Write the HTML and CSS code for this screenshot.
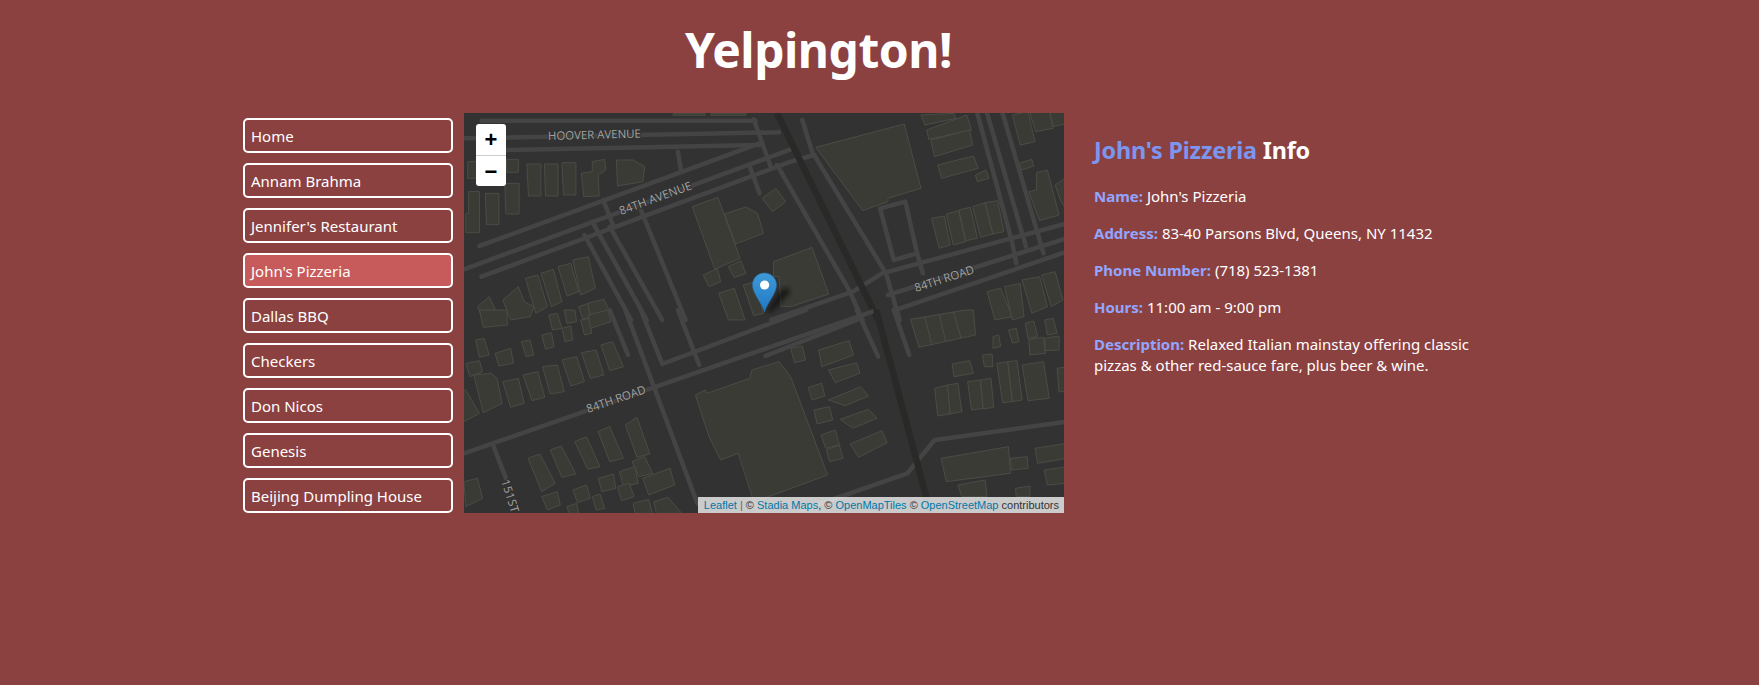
FILE: index.html
```html
<!DOCTYPE html>
<html lang="en">
<head>
<meta charset="utf-8">
<title>Yelpington!</title>
<link rel="stylesheet" href="styles.css">
</head>
<body>
<div class="page">
  <h1 class="title">Yelpington!</h1>
  <main class="content">
    <nav class="nav">
      <a class="nav-link">Home</a>
      <a class="nav-link">Annam Brahma</a>
      <a class="nav-link">Jennifer's Restaurant</a>
      <a class="nav-link active">John's Pizzeria</a>
      <a class="nav-link">Dallas BBQ</a>
      <a class="nav-link">Checkers</a>
      <a class="nav-link">Don Nicos</a>
      <a class="nav-link">Genesis</a>
      <a class="nav-link">Beijing Dumpling House</a>
    </nav>
    <div class="map">
      <svg class="map-art" viewBox="0 0 600 400" width="600" height="400">
        <defs>
          <linearGradient id="pinFill" x1="0" y1="0" x2="0" y2="1">
            <stop offset="0" stop-color="#3f9ad8"/>
            <stop offset="1" stop-color="#1f78c4"/>
          </linearGradient>
          <filter id="blur"><feGaussianBlur stdDeviation="2.5"/></filter>
        </defs>
        <g transform="translate(-4,-3) scale(.389,.3333)">
          <g class="bld">
            <path d="M915 112L1142 42L1185 235L1100 265V275L1035 302Z"/>
            <path d="M597 290L663 262L720 445L655 478Z"/><path d="M680 312L735 291L765 310L780 370L708 402Z"/>
            <path d="M777 265L812 235L837 275L803 305Z"/><path d="M625 495L662 476L670 515L640 530Z"/>
            <path d="M690 470L722 452L735 490L705 503Z"/><path d="M806 455L905 412L948 552L850 590L825 590L820 500L806 500Z"/>
            <path d="M665 550L705 535L733 630H690Z"/><path d="M728 525L760 515L780 610L755 617Z"/>
            <path d="M20 155H60V205H20Z"/><path d="M120 148H150V187H120Z"/><path d="M172 162H208V258H176Z"/>
            <path d="M217 162H252V258H220Z"/><path d="M262 158H298V255H266Z"/>
            <path d="M312 190L340 185V155L372 148L375 180L355 195L358 258L318 260Z"/>
            <path d="M402 150H445L475 170L470 215L405 228Z"/><path d="M115 220H152V312H118Z"/>
            <path d="M65 250H100V344H68Z"/><path d="M22 245H50V368H15V310H22Z"/>
            <path d="M548 10H630V16H548Z"/><path d="M645 10H735V16H645Z"/>
            <path d="M1185 15L1270 10L1275 25L1195 45Z"/><path d="M1200 60L1303 15L1315 60L1205 88Z"/>
            <path d="M1210 90L1310 60L1318 105L1220 140Z"/><path d="M1228 165L1320 138L1332 175L1238 205Z"/>
            <path d="M1325 195L1352 180L1360 205L1330 215Z"/><path d="M1212 325L1245 318L1260 405L1232 415Z"/>
            <path d="M1250 312L1282 302L1300 395L1268 405Z"/><path d="M1282 300L1312 292L1330 385L1300 392Z"/>
            <path d="M1318 290L1350 278L1370 372L1338 382Z"/><path d="M1350 278L1382 272L1398 365L1370 372Z"/>
            <path d="M1437 160L1470 148L1475 168L1445 180Z"/><path d="M1420 15L1460 5L1478 95L1440 105Z"/>
            <path d="M1465 10L1515 0L1525 55L1480 65Z"/><path d="M1515 0H1560V40L1525 50Z"/>
            <path d="M1462 245L1482 240V188L1510 180L1540 315L1490 332Z"/><path d="M1530 225L1560 200V300L1545 275Z"/>
            <path d="M1355 545L1390 535L1420 620L1375 630Z"/><path d="M1400 530L1440 520L1450 620L1420 630Z"/>
            <path d="M1445 510L1490 500L1510 590L1470 610Z"/><path d="M1495 495L1530 485L1550 570L1520 590Z"/>
            <path d="M290 450L330 440L348 535L310 555Z"/><path d="M252 470L285 460L305 545L275 558Z"/>
            <path d="M208 490L240 478L262 575L235 590Z"/><path d="M168 505L200 495L225 590L195 610Z"/>
            <path d="M110 570L150 530L165 575L190 590L180 620L130 630Z"/><path d="M45 590L75 560L95 610L115 630H60Z"/>
            <path d="M305 590L330 580L335 625H315Z"/><path d="M328 580L370 568L385 605L335 615Z"/>
          </g>
          <g class="road">
            <path d="M55 32H760"/><path d="M10 85L820 67"/><path d="M120 120L770 105"/>
            <path d="M50 408L770 100"/><path d="M10 478L850 118"/><path d="M55 500L850 155L910 135"/>
            <path d="M755 28L800 175"/><path d="M745 170L770 250"/><path d="M560 125L568 180"/>
            <path d="M465 300L580 630"/><path d="M368 270L395 350"/><path d="M340 335L480 630"/>
            <path d="M320 375L440 630"/><path d="M385 350L520 630"/>
            <path d="M800 630L1010 545L1085 490L1560 340"/><path d="M1100 555L1560 385"/><path d="M1120 600L1560 425"/>
            <path d="M880 30L905 125L1095 490L1130 630"/><path d="M815 165L1000 540L1035 630"/>
            <path d="M1080 295L1145 275L1175 430L1115 450Z"/><path d="M1175 430L1190 490"/>
            <path d="M1330 10L1420 400L1430 460"/><path d="M1355 10L1455 410"/><path d="M1395 10L1500 430"/>
          </g>
          <path class="rail" d="M815 10L1075 630"/>
        </g>
        <g transform="translate(-4,197) scale(.389,.3333)">
          <g class="bld">
            <path d="M605 255L630 240L635 250L745 205L750 180L820 155L850 200L945 495L770 570L790 610H765L715 430L670 450L640 380Z"/>
            <path d="M850 115L880 108L888 150L860 158Z"/><path d="M922 120L1000 92L1012 135L930 170Z"/>
            <path d="M947 180L1020 158L1028 190L965 218Z"/><path d="M895 232L930 220L938 258L905 270Z"/>
            <path d="M947 270L1030 230L1050 258L990 287Z"/><path d="M910 300L950 290L958 330L918 342Z"/>
            <path d="M977 328L1050 298L1072 325L1010 355Z"/><path d="M928 375L965 360L975 405L940 415Z"/>
            <path d="M942 420L975 405L985 445L950 455Z"/><path d="M1003 402L1085 362L1098 398L1025 442Z"/>
            <path d="M1158 28L1300 0H1320L1325 75L1180 112Z"/><path d="M1195 20L1212 100M1232 12L1248 92M1268 5L1288 84"/>
            <path d="M1370 80L1385 75L1390 110L1370 115Z"/><path d="M1410 60L1430 55L1437 95L1420 100Z"/>
            <path d="M1453 40L1475 33L1485 80L1460 85Z"/><path d="M1503 30L1525 25L1535 70L1510 75Z"/>
            <path d="M1462 88L1500 82L1505 130L1465 135Z"/><path d="M1503 85L1540 78L1540 120L1505 122Z"/>
            <path d="M1265 162L1310 152L1320 190L1270 200Z"/><path d="M1343 135L1368 132L1370 170L1348 170Z"/>
            <path d="M1380 160L1408 155L1420 275L1395 278Z"/><path d="M1408 155L1432 152L1445 270L1420 275Z"/>
            <path d="M1445 165L1500 155L1515 265L1460 272Z"/><path d="M1220 235L1255 225L1260 312L1228 318Z"/>
            <path d="M1253 225L1280 220L1290 305L1260 312Z"/><path d="M1305 215L1338 210L1345 295L1315 300Z"/>
            <path d="M1338 210L1365 205L1372 292L1345 297Z"/><path d="M1535 175L1560 170V245H1540Z"/>
            <path d="M1237 445L1410 410L1415 490L1250 515Z"/><path d="M1415 445L1458 440L1460 475L1418 480Z"/>
            <path d="M1478 415L1560 400V445L1485 460Z"/><path d="M1502 480L1560 470V520L1510 525Z"/>
            <path d="M1280 525L1350 510L1355 560H1290Z"/><path d="M1428 535L1465 528L1465 560H1430Z"/>
            <path d="M50 0H120L122 45L60 52Z"/><path d="M228 15L250 10L262 55L238 60Z"/>
            <path d="M268 0H295L300 35L275 40Z"/><path d="M310 30L335 25L338 70L320 75Z"/>
            <path d="M330 15L380 0L388 35L335 55Z"/><path d="M262 55L285 48L290 90L270 95Z"/>
            <path d="M210 75L235 68L242 110L220 118Z"/><path d="M158 95L180 90L190 135L170 140Z"/>
            <path d="M90 130L130 115L138 160L100 168Z"/><path d="M40 90L62 85L75 135L50 142Z"/>
            <path d="M15 160L50 152L58 185L25 200Z"/><path d="M35 195L80 190L95 205L108 280L60 308Z"/>
            <path d="M0 240L15 240L50 310L10 335L0 330Z"/><path d="M110 215L150 205L165 280L130 292Z"/>
            <path d="M162 195L200 185L218 262L185 272Z"/><path d="M212 170L250 165L268 245L232 252Z"/>
            <path d="M262 150L300 140L320 215L285 228Z"/><path d="M312 128L350 120L370 195L335 205Z"/>
            <path d="M362 105L392 95L420 170L385 182Z"/><path d="M425 345L455 322L488 432L455 442Z"/>
            <path d="M355 365L385 350L420 445L385 455Z"/><path d="M295 395L325 380L360 470L328 478Z"/>
            <path d="M232 420L260 408L298 492L262 502Z"/><path d="M175 445L205 432L245 520L210 545Z"/>
            <path d="M442 455L475 440L495 490L460 500Z"/><path d="M470 505L540 475L552 525L485 555Z"/>
            <path d="M410 485L450 470L458 520L420 530Z"/><path d="M355 505L395 492L400 535L365 545Z"/>
            <path d="M405 530L435 520L448 560L415 572Z"/><path d="M290 540L325 525L335 565L302 578Z"/>
            <path d="M340 560L360 552L372 595L350 600Z"/><path d="M210 560L250 545L258 585L225 600Z"/>
            <path d="M275 590L300 580L305 610H280Z"/><path d="M445 580L485 568L495 610H450Z"/>
            <path d="M498 575L535 562L570 610H505Z"/><path d="M10 515L45 505L58 565L15 590Z"/>
          </g>
          <g class="road">
            <path d="M10 430L1060 5"/><path d="M465 0L520 162L890 0"/><path d="M560 0L615 165"/>
            <path d="M385 0L432 135"/><path d="M425 0L610 580"/><path d="M85 405L118 505"/>
            <path d="M785 138L1020 30"/><path d="M1020 0L1075 140"/><path d="M1115 0L1155 135"/>
            <path d="M880 600L1150 490L1220 390L1560 335"/>
          </g>
          <path class="rail" d="M1070 0L1210 610"/>
        </g>
        <g class="labels">
          <text transform="translate(84,27) rotate(-1.5)" textLength="93">HOOVER AVENUE</text>
          <text transform="translate(157,102) rotate(-20)" textLength="76">84TH AVENUE</text>
          <text transform="translate(452,179) rotate(-18)" textLength="62">84TH ROAD</text>
          <text transform="translate(124,300) rotate(-19)" textLength="62">84TH ROAD</text>
          <text transform="translate(37,368) rotate(72)" textLength="34">151ST</text>
        </g>
        <g class="marker">
          <path class="marker-shadow" d="M302 199L316 178C322 172 326 174 326 180L308 199Z" filter="url(#blur)"/>
          <path fill="url(#pinFill)" stroke="#2a6ea8" stroke-width=".6" d="M300.5 199C298 190 288.5 180.5 288.5 172C288.5 165 294 160 300.5 160C307 160 312.5 165 312.5 172C312.5 180.5 303 190 300.5 199Z"/>
          <circle cx="300.6" cy="172" r="4.6" fill="#fff"/>
        </g>
      </svg>
      <div class="zoom">
        <span class="zoom-btn">+</span>
        <span class="zoom-btn">−</span>
      </div>
      <div class="attribution"><a>Leaflet</a> <span class="sep">|</span> © <a>Stadia Maps</a>, © <a>OpenMapTiles</a> © <a>OpenStreetMap</a> contributors</div>
    </div>
    <section class="info">
      <h2 class="info-title"><span class="accent">John's Pizzeria</span> Info</h2>
      <p><strong>Name:</strong> John's Pizzeria</p>
      <p><strong>Address:</strong> 83-40 Parsons Blvd, Queens, NY 11432</p>
      <p><strong>Phone Number:</strong> (718) 523-1381</p>
      <p><strong>Hours:</strong> 11:00 am - 9:00 pm</p>
      <p><strong>Description:</strong> Relaxed Italian mainstay offering classic pizzas &amp; other red-sauce fare, plus beer &amp; wine.</p>
    </section>
  </main>
</div>
</body>
</html>
```

FILE: styles.css
```css
* { box-sizing: border-box; }
html, body { margin: 0; height: 100%; }
body {
  background: #8c4141;
  color: #fff;
  font-family: "Noto Sans", "Open Sans", sans-serif;
  overflow: hidden;
}
.page { padding-left: 170px; }
.title {
  width: 1297px;
  margin: 0;
  height: 113px;
  padding-top: 12px;
  text-align: center;
  font-size: 48px;
  line-height: 76px;
  font-weight: 700;
  letter-spacing: -0.5px;
}
.content { display: flex; padding-left: 73px; }
.nav { flex: none; width: 210px; margin-right: 11px; padding-top: 5px; display: flex; flex-direction: column; gap: 10px; }
.nav-link {
  display: flex;
  align-items: center;
  height: 35px;
  padding: 0 6px;
  border: 2px solid #fff;
  border-radius: 5px;
  font-size: 15px;
}
.active { background: #c75b5b; }
.map { position: relative; width: 600px; height: 400px; background: #323232; overflow: hidden; flex: none; }
.map-art { display: block; }
.bld path { fill: #393b34; stroke: #4a4c45; stroke-width: 1; vector-effect: non-scaling-stroke; }
.road path { fill: none; stroke: #444; stroke-width: 4.5; stroke-linecap: round; stroke-linejoin: round; vector-effect: non-scaling-stroke; }
.rail { fill: none; stroke: #292927; stroke-width: 6.5; vector-effect: non-scaling-stroke; }
.labels text { font-family: "Open Sans", sans-serif; font-size: 11.5px; fill: #a3a3a3; stroke: #323232; stroke-width: 2px; paint-order: stroke; }
.marker-shadow { fill: #000; opacity: .55; }
.zoom {
  position: absolute;
  left: 12px;
  top: 11px;
  width: 30px;
  background: #fff;
  border-radius: 3px;
  color: #000;
  display: flex;
  flex-direction: column;
}
.zoom-btn {
  height: 31px;
  font: 700 22px/31px "Liberation Sans", Arial, sans-serif;
  text-align: center;
}
.zoom-btn + .zoom-btn { border-top: 1px solid #ccc; line-height: 31px; }
.attribution {
  position: absolute;
  right: 0;
  bottom: 0;
  height: 16px;
  padding: 0 5px 0 6px;
  background: rgba(255, 255, 255, .75);
  color: #333;
  font: 11px/16px "Liberation Sans", Arial, sans-serif;
  white-space: nowrap;
}
.attribution a { color: #0078a8; }
.sep { color: #666; }
.info { flex: none; width: 380px; margin-left: 30px; padding-top: 20px; font-size: 15px; line-height: 21px; }
.info-title { margin: 0 0 19px; font-size: 23.4px; line-height: 34px; font-weight: 700; letter-spacing: -0.2px; }
.accent { color: #7b96f0; }
.info p { margin: 0 0 16px; }
.info strong { color: #92a5ff; font-weight: 700; }
```
